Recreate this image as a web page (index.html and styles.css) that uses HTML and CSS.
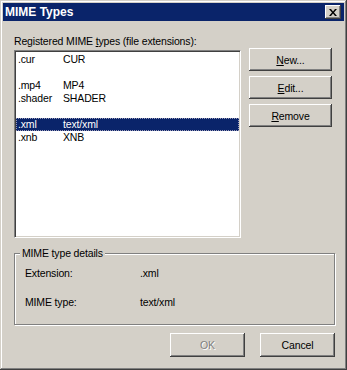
FILE: index.html
```html
<!DOCTYPE html>
<html lang="en">
<head>
    <meta charset="UTF-8">
    <title>MIME Types</title>
    <link rel="stylesheet" href="styles.css">
</head>
<body>
    <div class="window">
        <div class="titlebar">
            <span class="title">MIME Types</span>
            <span class="close">
                <svg width="8" height="7" viewBox="0 0 8 7"><path d="M0 0h2l2 2.4L6 0h2L5 3.5 8 7H6L4 4.6 2 7H0l3-3.5z" fill="#000"/></svg>
            </span>
        </div>

        <div class="content">
            <div class="main">
                <div class="list-col">
                    <div class="label">Registered MIME <u>t</u>ypes (file extensions):</div>
                    <div class="listbox">
                        <div class="row"><span class="ext">.cur</span><span>CUR</span></div>
                        <div class="row"></div>
                        <div class="row"><span class="ext">.mp4</span><span>MP4</span></div>
                        <div class="row"><span class="ext">.shader</span><span>SHADER</span></div>
                        <div class="row"></div>
                        <div class="row selected"><span class="ext">.xml</span><span>text/xml</span></div>
                        <div class="row"><span class="ext">.xnb</span><span>XNB</span></div>
                    </div>
                </div>
                <div class="side-buttons">
                    <button class="btn"><u>N</u>ew...</button>
                    <button class="btn"><u>E</u>dit...</button>
                    <button class="btn"><u>R</u>emove</button>
                </div>
            </div>

            <fieldset class="details">
                <legend>MIME type details</legend>
                <div class="field"><span class="field-name">Extension:</span><span>.xml</span></div>
                <div class="field"><span class="field-name">MIME type:</span><span>text/xml</span></div>
            </fieldset>

            <div class="footer">
                <button class="btn btn-wide" disabled>OK</button>
                <button class="btn btn-wide">Cancel</button>
            </div>
        </div>
    </div>
</body>
</html>
```

FILE: styles.css
```css
body {
    margin: 0;
    font-family: "Liberation Sans", Arial, sans-serif;
    font-size: 10.5px;
    letter-spacing: -0.15px;
    color: #000;
    background-color: #d4d0c8;
}

.window {
    width: 347px;
    height: 370px;
    box-sizing: border-box;
    padding: 3px;
    background-color: #d4d0c8;
    box-shadow: inset -1px -1px #404040, inset 1px 1px #d4d0c8,
                inset -2px -2px #808080, inset 2px 2px #fff;
}

.titlebar {
    height: 18px;
    display: flex;
    align-items: center;
    justify-content: space-between;
    padding: 0 3px 0 2px;
    background-color: #0a246a; /* classic navy caption */
    color: #fff;
}

.title {
    font-weight: bold;
    font-size: 12px;
    letter-spacing: 0;
}

.close {
    width: 16px;
    height: 14px;
    display: flex;
    align-items: center;
    justify-content: center;
    background-color: #d4d0c8;
    box-shadow: inset -1px -1px #404040, inset 1px 1px #fff,
                inset -2px -2px #808080, inset 2px 2px #d4d0c8;
}

.content {
    padding: 14px 9px 0 11px;
}

.main {
    display: flex;
}

.label {
    line-height: 13px;
    margin-bottom: 2px;
}

.listbox {
    width: 227px;
    height: 188px;
    box-sizing: border-box;
    padding: 2px 1px 0;
    background-color: #fff;
    border: 1px solid;
    border-color: #808080 #fff #fff #808080;
    box-shadow: inset 1px 1px #404040, inset -1px -1px #d4d0c8;
}

.row {
    display: flex;
    height: 13px;
    line-height: 13px;
    padding-left: 2px;
}

.ext {
    width: 45px;
}

.row.selected {
    background-color: #0a246a;
    color: #fff;
    outline: 1px dotted #9a9ab8;
    outline-offset: -1px;
}

.side-buttons {
    display: flex;
    flex-direction: column;
    gap: 5px;
    margin-left: 8px;
    padding-top: 13px;
}

.btn {
    width: 83px;
    height: 23px;
    padding: 0;
    border: none;
    font: inherit;
    letter-spacing: inherit;
    color: #000;
    background-color: #d4d0c8;
    box-shadow: inset -1px -1px #404040, inset 1px 1px #fff,
                inset -2px -2px #808080, inset 2px 2px #d4d0c8;
}

.btn:disabled {
    color: #808080;
    text-shadow: 1px 1px #fff;
}

.details {
    margin: 9px 0 0;
    padding: 7px 10px 15px;
    border: 1px solid #808080;
    box-shadow: inset 1px 1px #fff, 1px 1px #fff;
    min-width: 0;
}

.details legend {
    margin-left: -5px;
    padding: 0 2px;
    line-height: 13px;
    background-color: #d4d0c8;
}

.field {
    display: flex;
    line-height: 13px;
}

.field + .field {
    margin-top: 16px;
}

.field-name {
    width: 115px;
}

.footer {
    display: flex;
    justify-content: flex-end;
    gap: 15px;
    margin-top: 8px;
}

.btn-wide {
    width: 75px;
    height: 24px;
}
```
